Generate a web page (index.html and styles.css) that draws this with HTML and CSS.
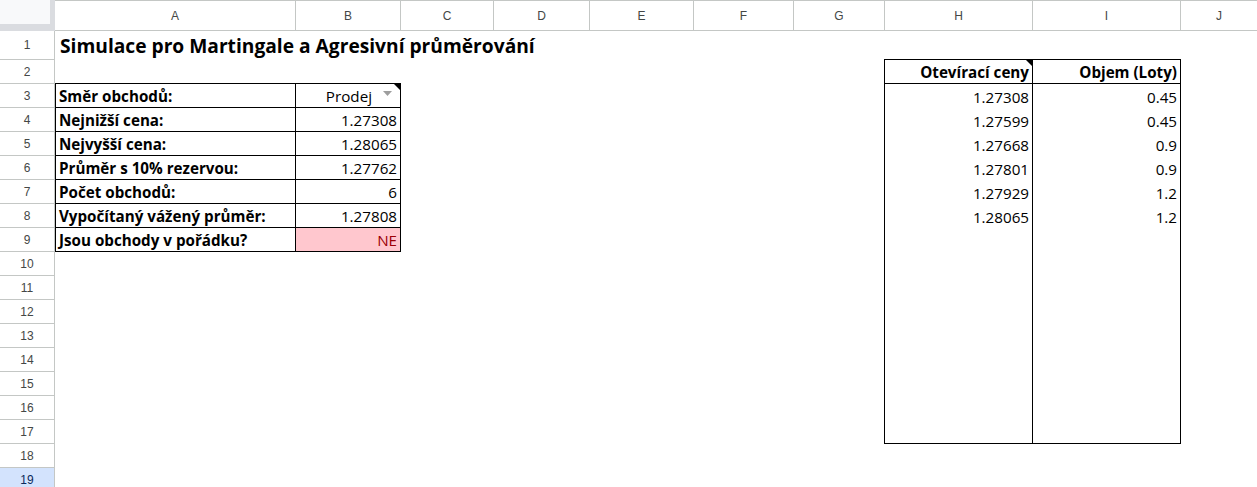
FILE: index.html
```html
<!DOCTYPE html>
<html lang="cs">
<head>
<meta charset="utf-8">
<title>Simulace pro Martingale</title>
<link rel="stylesheet" href="styles.css">
</head>
<body>
<div class="sheet">
  <div class="colheads">
    <div class="corner"></div>
    <div class="ch ca">A</div>
    <div class="ch cb">B</div>
    <div class="ch cc">C</div>
    <div class="ch cd">D</div>
    <div class="ch ce">E</div>
    <div class="ch cf">F</div>
    <div class="ch cg">G</div>
    <div class="ch chh">H</div>
    <div class="ch ci">I</div>
    <div class="ch cj">J</div>
  </div>
  <div class="body">
    <div class="rowheads">
      <div class="rh first">1</div>
      <div class="rh">2</div>
      <div class="rh">3</div>
      <div class="rh">4</div>
      <div class="rh">5</div>
      <div class="rh">6</div>
      <div class="rh">7</div>
      <div class="rh">8</div>
      <div class="rh">9</div>
      <div class="rh">10</div>
      <div class="rh">11</div>
      <div class="rh">12</div>
      <div class="rh">13</div>
      <div class="rh">14</div>
      <div class="rh">15</div>
      <div class="rh">16</div>
      <div class="rh">17</div>
      <div class="rh">18</div>
      <div class="rh sel">19</div>
    </div>
    <div class="cells">
      <div class="title">Simulace pro Martingale a Agresivní průměrování</div>

      <div class="params">
        <div class="lbl">Směr obchodů:</div>
        <div class="val dropdown">Prodej
          <svg class="arrow" width="9" height="5" viewBox="0 0 9 5"><path d="M0 0h9L4.5 5z" fill="#9e9e9e"/></svg>
        </div>
        <div class="lbl">Nejnižší cena:</div>
        <div class="val">1.27308</div>
        <div class="lbl">Nejvyšší cena:</div>
        <div class="val">1.28065</div>
        <div class="lbl">Průměr s 10% rezervou:</div>
        <div class="val">1.27762</div>
        <div class="lbl">Počet obchodů:</div>
        <div class="val">6</div>
        <div class="lbl">Vypočítaný vážený průměr:</div>
        <div class="val">1.27808</div>
        <div class="lbl">Jsou obchody v pořádku?</div>
        <div class="val bad">NE</div>
      </div>

      <div class="orders">
        <div class="ocol ocol-h">
          <div class="ohead note">Otevírací ceny</div>
          <div class="oval">1.27308</div>
          <div class="oval">1.27599</div>
          <div class="oval">1.27668</div>
          <div class="oval">1.27801</div>
          <div class="oval">1.27929</div>
          <div class="oval">1.28065</div>
        </div>
        <div class="ocol">
          <div class="ohead">Objem (Loty)</div>
          <div class="oval">0.45</div>
          <div class="oval">0.45</div>
          <div class="oval">0.9</div>
          <div class="oval">0.9</div>
          <div class="oval">1.2</div>
          <div class="oval">1.2</div>
        </div>
      </div>
    </div>
  </div>
</div>
</body>
</html>
```

FILE: styles.css
```css
* { box-sizing: border-box; }

html, body {
  margin: 0;
  padding: 0;
  background: #ffffff;
  overflow: hidden;
}

.sheet {
  width: 1257px;
  height: 487px;
  overflow: hidden;
  display: flex;
  flex-direction: column;
}

/* column headers */
.colheads {
  display: flex;
  height: 31px;
  flex: none;
}

.corner {
  width: 55px;
  height: 31px;
  background: #f8f9fa;
  border-right: 5px solid #dadce0;
  border-bottom: 7px solid #dadce0;
}

.ch {
  height: 31px;
  border-top: 1px solid #c4c7c5;
  border-right: 1px solid #c4c7c5;
  border-bottom: 1px solid #c4c7c5;
  display: flex;
  align-items: center;
  justify-content: center;
  font-family: "Liberation Sans", Arial, sans-serif;
  font-size: 12px;
  color: #444746;
  padding-top: 1px;
}

.ca { width: 241px; }
.cb { width: 105px; }
.cc { width: 93px; }
.cd { width: 96px; }
.ce { width: 104px; }
.cf { width: 100px; }
.cg { width: 91px; }
.chh { width: 148px; }
.ci { width: 148px; }
.cj { width: 76px; border-right: none; }

/* body */
.body {
  display: flex;
  flex: 1;
}

.rowheads {
  width: 55px;
  flex: none;
  display: flex;
  flex-direction: column;
}

.rh {
  height: 24px;
  flex: none;
  border-right: 1px solid #c4c7c5;
  border-bottom: 1px solid #c4c7c5;
  display: flex;
  align-items: center;
  justify-content: center;
  font-family: "Liberation Sans", Arial, sans-serif;
  font-size: 12px;
  color: #444746;
}

.rh.first { height: 29px; }

.rh.sel {
  background: #d3e3fd;
  color: #0b2a5c;
}

.cells {
  display: grid;
  grid-template-columns: 241px 105px 93px 96px 104px 100px 91px 148px 148px 76px;
  grid-template-rows: 29px repeat(18, 24px);
  font-family: "Open Sans", "Noto Sans", sans-serif;
  font-size: 15.2px;
  color: #000;
}

.title {
  grid-row: 1;
  grid-column: 1 / -1;
  font-weight: 700;
  font-size: 19.2px;
  padding: 0 0 1px 5px;
  display: flex;
  align-items: flex-end;
  white-space: nowrap;
}

/* parameter table A3:B9 */
.params {
  grid-row: 3 / 10;
  grid-column: 1 / 3;
  align-self: start;
  margin-top: -1px;
  display: grid;
  grid-template-columns: 240px 105px;
  grid-auto-rows: 24px;
  border-top: 1px solid #000;
  border-left: 1px solid #000;
}

.lbl, .val {
  border-right: 1px solid #000;
  border-bottom: 1px solid #000;
  display: flex;
  align-items: flex-end;
  padding-bottom: 0;
  white-space: nowrap;
  line-height: 22px;
}

.lbl {
  font-weight: 700;
  padding-left: 3px;
}

.val {
  justify-content: flex-end;
  padding-right: 3px;
}

.dropdown {
  position: relative;
  padding-right: 28px;
}

.dropdown .arrow {
  position: absolute;
  right: 8px;
  top: 7px;
}

.dropdown::after,
.note::after {
  content: "";
  position: absolute;
  top: 0;
  right: 0;
  width: 0;
  height: 0;
  border-top: 6px solid #000;
  border-left: 6px solid transparent;
}

.bad {
  background: #ffc7ce;
  color: #9c0006;
}

/* orders table H2:I17 */
.orders {
  grid-row: 2 / 18;
  grid-column: 8 / 10;
  margin-top: -1px;
  margin-left: -1px;
  height: 385px;
  border: 1px solid #000;
  display: flex;
}

.ocol {
  flex: 1;
  display: flex;
  flex-direction: column;
}

.ocol-h {
  flex: none;
  width: 148px;
  border-right: 1px solid #000;
}

.ohead {
  position: relative;
  height: 24px;
  border-bottom: 1px solid #000;
  font-weight: 700;
}

.ohead, .oval {
  display: flex;
  align-items: flex-end;
  justify-content: flex-end;
  padding: 0 3px 0 0;
  white-space: nowrap;
  line-height: 22px;
}

.oval {
  height: 24px;
}
```
